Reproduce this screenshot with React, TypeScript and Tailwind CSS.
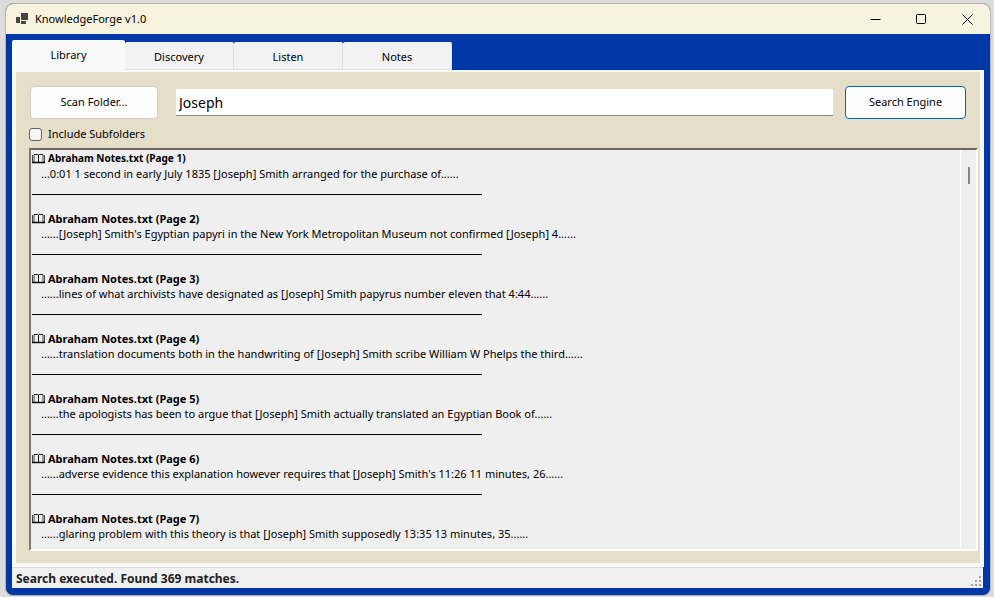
import { useState } from "react";

interface SearchResult {
  page: number;
  snippet: string;
}

const tabs = ["Library", "Discovery", "Listen", "Notes"];

const results: SearchResult[] = [
  { page: 1, snippet: "...0:01 1 second in early July 1835 [Joseph] Smith arranged for the purchase of......" },
  { page: 2, snippet: "......[Joseph] Smith's Egyptian papyri in the New York Metropolitan Museum not confirmed [Joseph] 4......" },
  { page: 3, snippet: "......lines of what archivists have designated as [Joseph] Smith papyrus number eleven that 4:44......" },
  { page: 4, snippet: "......translation documents both in the handwriting of [Joseph] Smith scribe William W Phelps the third......" },
  { page: 5, snippet: "......the apologists has been to argue that [Joseph] Smith actually translated an Egyptian Book of......" },
  { page: 6, snippet: "......adverse evidence this explanation however requires that [Joseph] Smith's 11:26 11 minutes, 26......" },
  { page: 7, snippet: "......glaring problem with this theory is that [Joseph] Smith supposedly 13:35 13 minutes, 35......" },
];

const AppIcon = () => (
  <svg width="12" height="12" viewBox="0 0 12 12" fill="#444444" shapeRendering="crispEdges">
    <rect x="0" y="4" width="4" height="6" />
    <rect x="5" y="0" width="7" height="7" />
    <rect x="5" y="8" width="5" height="3" />
  </svg>
);

const BookIcon = () => (
  <svg width="13" height="10" viewBox="0 0 13 10" fill="none" stroke="#000000" className="shrink-0">
    <path d="M2 .5h3.5Q6.5.5 6.5 1.5Q6.5.5 7.5.5H11" strokeOpacity="0.85" />
    <path d="M6.5 1v7.5" />
    <path d="M0 8.5h13" strokeWidth="1.4" />
    <path d="M.5 1v7.5M12.5 1v7.5" strokeOpacity="0.7" />
    <path d="M2 .5v7.5M11 .5v7.5" strokeOpacity="0.7" />
  </svg>
);

const TitleBar = () => (
  <header className="flex h-[30px] shrink-0 items-center bg-[#f8f3de] pl-[10px]">
    <AppIcon />
    <h1 className="ml-[7px] flex-1">KnowledgeForge v1.0</h1>
    <button aria-label="Minimize" className="flex h-full w-[46px] items-center justify-center">
      <svg width="11" height="11" viewBox="0 0 11 11" stroke="#000000">
        <path d="M.5 5.5h10" />
      </svg>
    </button>
    <button aria-label="Maximize" className="flex h-full w-[46px] items-center justify-center">
      <svg width="11" height="11" viewBox="0 0 11 11" fill="none" stroke="#000000">
        <rect x=".5" y=".5" width="9" height="9" rx="1" />
      </svg>
    </button>
    <button aria-label="Close" className="flex h-full w-[46px] items-center justify-center">
      <svg width="11" height="11" viewBox="0 0 11 11" stroke="#000000">
        <path d="M.5.5l10 10M10.5.5l-10 10" />
      </svg>
    </button>
  </header>
);

const ResultItem = ({ page, snippet }: SearchResult) => (
  <li className="h-[60px] whitespace-nowrap leading-[15px]">
    <h2 className={`flex items-center gap-[3px] font-bold ${page === 1 ? "text-[10px]" : "text-[11px]"}`}>
      <BookIcon />
      <span className="leading-[15px]">Abraham Notes.txt (Page {page})</span>
    </h2>
    <p className="pl-[9px] leading-[15px]">{snippet}</p>
    <hr className="mt-[13px] w-[450px] border-t border-black" />
  </li>
);

const App = () => {
  const [activeTab, setActiveTab] = useState("Library");
  const [query, setQuery] = useState("Joseph");
  const [includeSubfolders, setIncludeSubfolders] = useState(false);

  return (
    <div className="flex h-screen bg-[#dcdcdc] pt-[3px] pr-[3px] pb-px pl-[5px] font-['Noto_Sans','Open_Sans',sans-serif] text-[11px] text-black">
      <div className="flex min-w-0 flex-1 flex-col overflow-hidden rounded-lg border border-[#b4b4b0] bg-[#0037a6]">
        <TitleBar />

        <div className="flex min-h-0 flex-1 flex-col px-[6px] pt-[6px] pb-[7px]">
          <nav role="tablist" className="flex h-[30px] shrink-0 items-end">
            {tabs.map((tab) => (
              <button
                key={tab}
                role="tab"
                aria-selected={tab === activeTab}
                onClick={() => setActiveTab(tab)}
                className={
                  tab === activeTab
                    ? "h-[30px] w-[113px] rounded-t-xs bg-[#f9f9f9]"
                    : "h-7 w-[109px] rounded-t-xs border-r border-b border-[#e0e0e0] bg-[#f2f2f2] pt-1"
                }
              >
                {tab}
              </button>
            ))}
          </nav>

          <main className="flex min-h-0 flex-1 flex-col bg-[#f9f9f9] pt-[2px] pr-1 pb-1 pl-1">
            <div className="flex min-h-0 flex-1 flex-col bg-[#e5dec9] pt-[14px] pr-[2px] pb-3 pl-[13px]">
              <div className="flex items-center pr-3 pl-px">
                <button className="h-[33px] w-32 shrink-0 rounded border border-[#d0cdc3] bg-[#fdfdfd]">
                  Scan Folder...
                </button>
                <input
                  type="text"
                  aria-label="Search text"
                  value={query}
                  onChange={(e) => setQuery(e.target.value)}
                  className="ml-[18px] h-[27px] min-w-0 flex-1 border-b border-[#868686] bg-white px-[3px] text-sm outline-none"
                />
                <button className="ml-3 h-[33px] w-[121px] shrink-0 rounded border border-[#0067b5] bg-[#fdfdfd]">
                  Search Engine
                </button>
              </div>

              <label className="mt-2 flex h-[15px] items-center gap-[6px] self-start">
                <input
                  type="checkbox"
                  checked={includeSubfolders}
                  onChange={(e) => setIncludeSubfolders(e.target.checked)}
                  className="size-[13px] appearance-none rounded-[3px] border border-[#626262] bg-[#f5f5f5] checked:bg-[#0067c0]"
                />
                Include Subfolders
              </label>

              <div className="mt-[6px] flex min-h-0 flex-1 border-2 border-t-[#696969] border-r-white border-b-white border-l-[#7a7a7a] bg-[#efefef]">
                <ul className="min-w-0 flex-1 overflow-hidden pt-px pl-px">
                  {results.map((result) => (
                    <ResultItem key={result.page} {...result} />
                  ))}
                </ul>
                <div className="w-4 shrink-0 border-l border-white pt-[17px] pl-[7px]">
                  <div className="h-[17px] w-[2px] bg-[#858585]" />
                </div>
              </div>
            </div>
          </main>

          <footer className="mr-px flex h-[21px] shrink-0 items-center justify-between border-t border-[#d7d7d7] bg-[#f0f0f0] pt-[2px] pr-[2px] pl-1 text-xs font-bold text-[#222222]">
            <span>Search executed. Found 369 matches.</span>
            <svg width="10" height="10" viewBox="0 0 10 10" fill="#a0a0a0" className="mt-1">
              <path d="M8 0h2v2H8zM4 4h2v2H4zM8 4h2v2H8zM0 8h2v2H0zM4 8h2v2H4zM8 8h2v2H8z" />
            </svg>
          </footer>
        </div>
      </div>
    </div>
  );
};

export default App;
